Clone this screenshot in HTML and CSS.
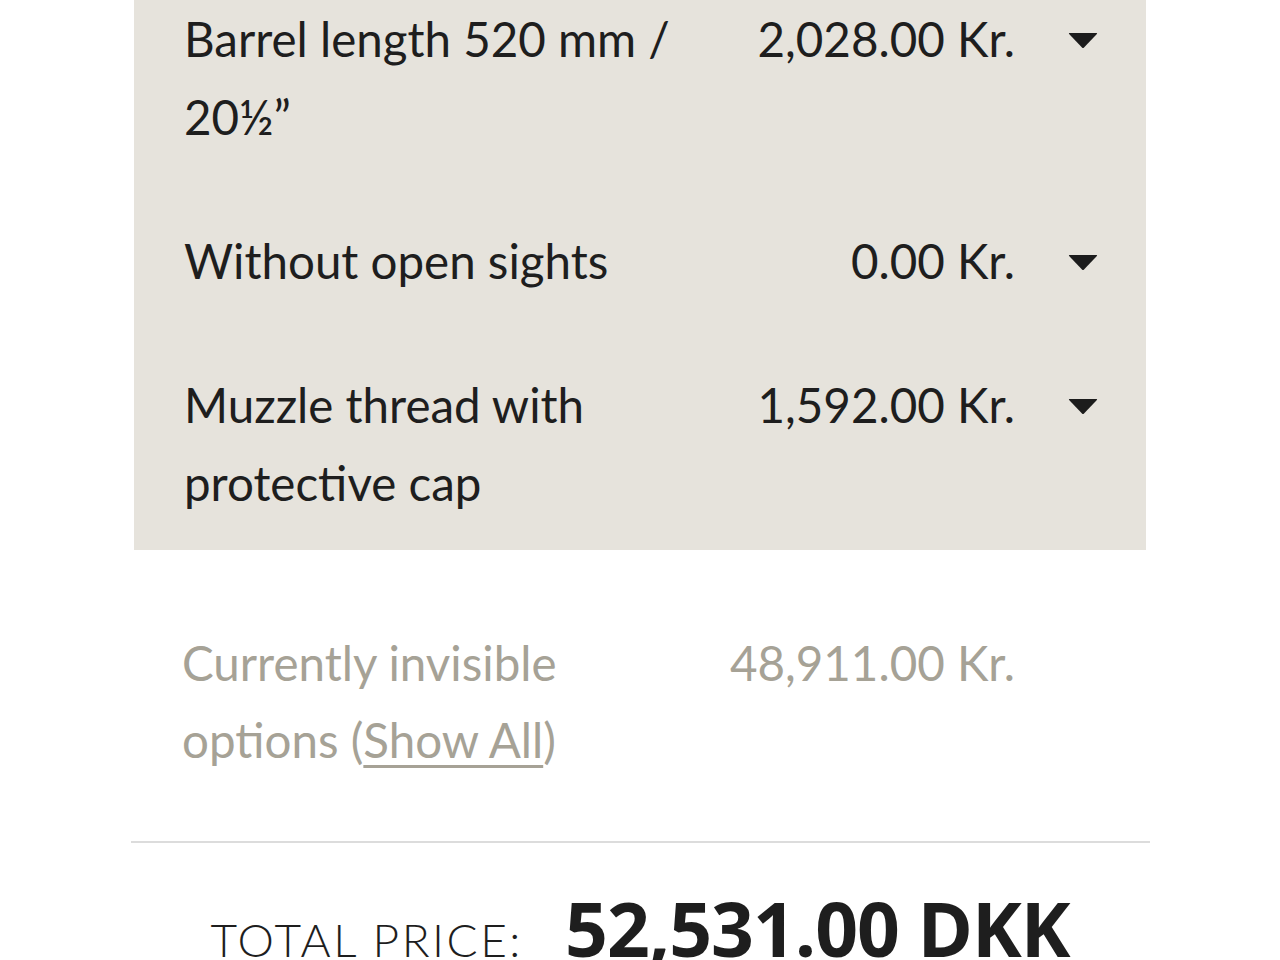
FILE: index.html
```html
<!DOCTYPE html>
<html lang="en">
<head>
<meta charset="utf-8">
<title>Configuration summary</title>
<link rel="stylesheet" href="styles.css">
</head>
<body>
<div class="page">
  <section class="options">
    <div class="row">
      <div class="label">Barrel length 520 mm /<br>20½”</div>
      <div class="price">2,028.00 Kr.</div>
      <div class="toggle"><svg viewBox="0 0 30 17" width="30" height="17"><path d="M1.5 1 H28.5 Q29.6 1 28.9 1.9 L16 15.6 Q15 16.6 14 15.6 L1.1 1.9 Q0.4 1 1.5 1 Z" fill="#1c1c1c"/></svg></div>
    </div>
    <div class="row">
      <div class="label">Without open sights</div>
      <div class="price">0.00 Kr.</div>
      <div class="toggle"><svg viewBox="0 0 30 17" width="30" height="17"><path d="M1.5 1 H28.5 Q29.6 1 28.9 1.9 L16 15.6 Q15 16.6 14 15.6 L1.1 1.9 Q0.4 1 1.5 1 Z" fill="#1c1c1c"/></svg></div>
    </div>
    <div class="row">
      <div class="label">Muzzle thread with<br>protective cap</div>
      <div class="price">1,592.00 Kr.</div>
      <div class="toggle"><svg viewBox="0 0 30 17" width="30" height="17"><path d="M1.5 1 H28.5 Q29.6 1 28.9 1.9 L16 15.6 Q15 16.6 14 15.6 L1.1 1.9 Q0.4 1 1.5 1 Z" fill="#1c1c1c"/></svg></div>
    </div>
  </section>
  <section class="hidden-options">
    <div class="row muted">
      <div class="label">Currently invisible<br>options (<a class="show-all" href="#">Show All</a>)</div>
      <div class="price">48,911.00 Kr.</div>
      <div class="toggle"></div>
    </div>
  </section>
  <hr class="divider">
  <div class="total">
    <span class="total-label">TOTAL PRICE:</span>
    <span class="total-value">52,531.00 DKK</span>
  </div>
</div>
</body>
</html>
```
FILE: styles.css
```css
html, body {
  margin: 0;
  padding: 0;
  background: #ffffff;
}
body {
  font-family: "Lato", "Open Sans", sans-serif;
  color: #1e1e1e;
  width: 1280px;
  height: 960px;
  overflow: hidden;
}
.page {
  padding-left: 131px;
  width: 1019px;
}
.options {
  background: #e6e3dc;
  margin: 0 4px 0 3px;
  padding: 0 48px 28px 50px;
}
.row {
  display: grid;
  grid-template-columns: 1fr auto 30px;
  column-gap: 53px;
  font-size: 47.5px;
  line-height: 78px;
}
.options .row + .row {
  margin-top: 66px;
}
.label {
  white-space: nowrap;
}
.price {
  text-align: right;
  white-space: nowrap;
}
.toggle {
  height: 78px;
  display: flex;
  align-items: center;
  padding-top: 3px;
  box-sizing: border-box;
}
.toggle svg {
  display: block;
}
.hidden-options {
  margin: 74px 4px 0 3px;
  padding: 0 48px 0 48px;
}
.muted {
  color: #a6a296;
  line-height: 77px;
}
.show-all {
  color: #a6a296;
  text-decoration: underline;
  text-decoration-thickness: 3px;
  text-underline-offset: 7px;
}
.divider {
  border: 0;
  height: 2px;
  background: #dcdcdc;
  margin: 63px 0 0 0;
  width: 1019px;
}
.total {
  text-align: center;
  width: 1280px;
  margin-left: -131px;
  margin-top: 34px;
  white-space: nowrap;
}
.total-label {
  font-family: "Lato", sans-serif;
  font-weight: 300;
  font-size: 46px;
  letter-spacing: 2.5px;
  color: #1e1e1e;
  margin-right: 38px;
}
.total-value {
  font-family: "Open Sans", sans-serif;
  font-weight: 700;
  font-size: 75px;
  letter-spacing: -1px;
  color: #1e1e1e;
}
```
